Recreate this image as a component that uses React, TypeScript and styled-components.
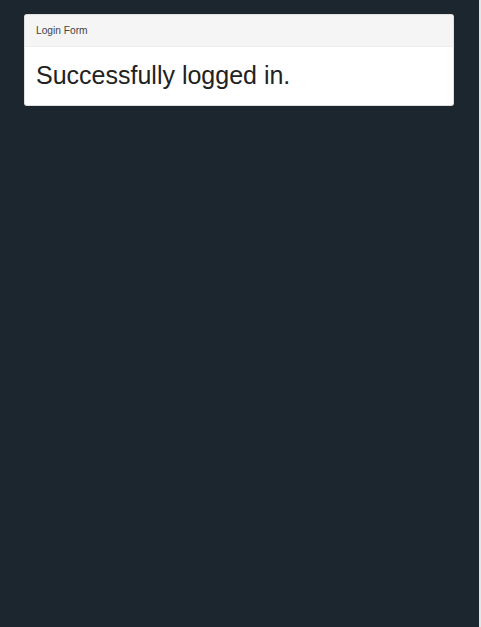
import React from "react";
import styled, { createGlobalStyle } from "styled-components";

const Global = createGlobalStyle`
  html, body { margin: 0; padding: 0; background: #e4e6e8; }
  body { font-family: "Liberation Sans", Arial, Helvetica, sans-serif; }
`;

const Page = styled.div`
  width: 479px;
  min-height: 627px;
  box-sizing: border-box;
  background: #1c262e;
  padding: 14px 25px 0 24px;
`;

const Card = styled.section`
  background: #ffffff;
  border: 1px solid rgba(0, 0, 0, 0.125);
  border-radius: 3px;
  overflow: hidden;
`;

const CardHeader = styled.header`
  background: #f5f5f5;
  color: #444;
  font-size: 10.2px;
  line-height: 15px;
  padding: 8px 11px 8px 11px;
  border-bottom: 1px solid rgba(0, 0, 0, 0.03);
`;

const CardBody = styled.div`
  padding: 13px 11px 15px 11px;
`;

const Message = styled.h1`
  margin: 0;
  font-size: 25px;
  font-weight: 400;
  line-height: 30px;
  color: #222;
`;

export default function App() {
  return (
    <>
      <Global />
      <Page>
        <Card>
          <CardHeader>Login Form</CardHeader>
          <CardBody>
            <Message>Successfully logged in.</Message>
          </CardBody>
        </Card>
      </Page>
    </>
  );
}
